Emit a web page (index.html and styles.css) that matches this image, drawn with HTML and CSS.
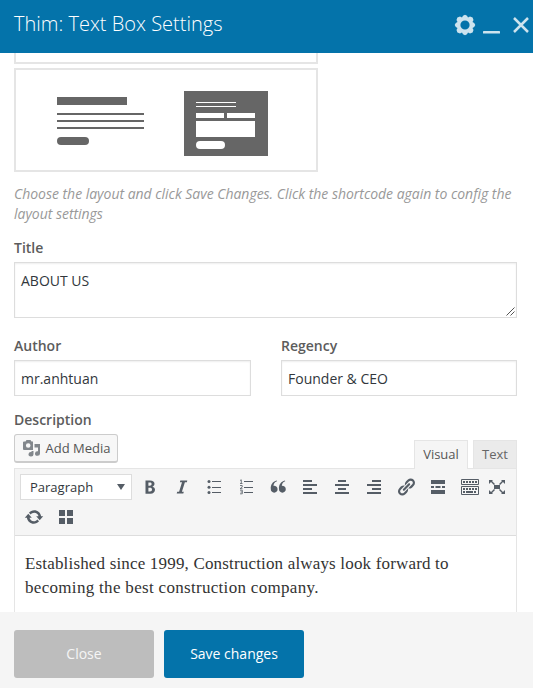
FILE: index.html
```html
<!DOCTYPE html>
<html lang="en">
<head>
<meta charset="utf-8">
<title>Thim: Text Box Settings</title>
<link rel="stylesheet" href="styles.css">
</head>
<body>
<div class="dialog">
  <header class="header">
    <h1 class="heading">Thim: Text Box Settings</h1>
    <div class="controls">
      <svg class="gear" width="22" height="22" viewBox="-11 -11 22 22"><path fill-rule="evenodd" d="M-2-9.2 0-10.3 2-9.2 3-7.5 5-8.5 7.6-7.6 8.5-5 7.5-3 9.2-2 10.3 0 9.2 2 7.5 3 8.5 5 7.6 7.6 5 8.5 3 7.5 2 9.2 0 10.3-2 9.2-3 7.5-5 8.5-7.6 7.6-8.5 5-7.5 3-9.2 2-10.3 0-9.2-2-7.5-3-8.5-5-7.6-7.6-5-8.5-3-7.5ZM0-4.6A4.6 4.6 0 1 0 0 4.6 4.6 4.6 0 1 0 0-4.6Z"/></svg>
      <svg class="minimize" width="17" height="22" viewBox="0 0 17 22"><rect y="17" width="17" height="2.6" rx=".6"/></svg>
      <svg class="dismiss" width="18" height="18" viewBox="0 0 18 18"><path d="M2 2 16 16M16 2 2 16"/></svg>
    </div>
  </header>

  <main class="content">
    <div class="layout-card layout-card-cut"></div>
    <div class="layout-card">
      <div class="sketch">
        <i class="sketch-title"></i><i class="sketch-line"></i><i class="sketch-line"></i><i class="sketch-line"></i><i class="sketch-pill"></i>
      </div>
      <div class="sketch-form">
        <i class="form-line"></i><i class="form-line"></i>
        <div class="form-row"><i></i><i></i></div>
        <i class="form-area"></i><i class="form-pill"></i>
      </div>
    </div>
    <p class="hint"><span class="hint-first">Choose the layout and click Save Changes. Click the shortcode again to config the</span><br>layout settings</p>

    <div class="label">Title</div>
    <div class="field field-area"><span>ABOUT US</span>
      <svg class="grip" width="9" height="9" viewBox="0 0 9 9"><path d="M.5 8.5 8.5.5M4.5 8.5 8.5 4.5"/></svg>
    </div>

    <div class="columns">
      <div><div class="label">Author</div><div class="field author">mr.anhtuan</div></div>
      <div><div class="label">Regency</div><div class="field regency">Founder &amp; CEO</div></div>
    </div>

    <div class="label">Description</div>
    <div class="editor-head">
      <div class="media-button">
        <svg width="18" height="17" viewBox="0 0 18 17"><path fill-rule="evenodd" d="M1 1.500H2.500L3.500 0H7.500L8.500 1.500H10V10H1Q0 10 0 9V2.500Q0 1.500 1 1.500ZM5.200 3.200A2.300 2.300 0 1 0 5.200 7.800 2.300 2.300 0 1 0 5.200 3.200Z"/><path d="M11.500 4H17V13.500A2.500 2.300 0 1 1 15 11.300V7.500H11.500ZM8.500 11H10.500V14.200A2.500 2.200 0 1 1 8.500 12.100Z"/></svg>
        <span>Add Media</span>
      </div>
      <div class="tabs"><div class="tab tab-active">Visual</div><div class="tab tab-text">Text</div></div>
    </div>

    <div class="editor">
      <div class="toolbar">
        <div class="row">
          <div class="select"><span>Paragraph</span><svg width="8" height="6" viewBox="0 0 8 6"><path d="M0 0H8L4 6Z"/></svg></div>
          <div class="tool"><svg viewBox="0 0 20 20"><path fill-rule="evenodd" d="M5.500 3.500H10C13 3.500 14.500 4.800 14.500 6.800 14.500 8.300 13.700 9.300 12.400 9.700 14.100 10 15 11.200 15 12.800 15 15.200 13.300 16.700 10.500 16.700H5.500ZM8.400 5.600V8.800H9.700C11 8.800 11.600 8.200 11.600 7.100 11.600 6 11 5.600 9.700 5.600ZM8.400 10.800V14.400H10C11.400 14.400 12 13.700 12 12.500 12 11.300 11.300 10.800 10 10.800Z"/></svg></div>
          <div class="tool"><svg viewBox="0 0 20 20"><path d="M8.300 3.500H15.300L14.900 5.300H12.900L9.900 14.700H11.800L11.300 16.500H4.700L5.200 14.700H7.100L10 5.300H7.900Z"/></svg></div>
          <div class="tool"><svg viewBox="0 0 20 20"><path d="M8 4H17V5H8ZM8 10H17V11H8ZM8 15H17V16H8Z"/><circle cx="5" cy="4.500" r="1.500"/><circle cx="5" cy="10.200" r="1.500"/><circle cx="5" cy="15.600" r="1.500"/></svg></div>
          <div class="tool"><svg viewBox="0 0 20 20"><path d="M8 4H17V5H8ZM8 10H17V11H8ZM8 15H17V16H8Z"/><path class="thin" d="M4 3.500 5.300 2.800V6.500M4 6.500H6.500M4 8.500H6.200V10.100L4 11.700H6.500M4 13.200H6.300V16.800H4M4.500 15H6.300"/></svg></div>
          <div class="tool"><svg viewBox="0 0 20 20"><path d="M9 4.200C6.500 5 5.300 7.300 5.600 8.900A3.400 3.400 0 1 1 2.800 12C2.400 8 4.500 4.600 8.800 3.500ZM17.200 4.200C14.800 5 13.700 7.300 13.900 8.900A3.400 3.400 0 1 1 11 12C10.600 8 12.700 4.600 17 3.500Z"/></svg></div>
          <div class="tool"><svg viewBox="0 0 20 20"><path d="M3 3H12V5H3ZM3 7H17V9H3ZM3 11H12V13H3ZM3 15H17V17H3Z"/></svg></div>
          <div class="tool"><svg viewBox="0 0 20 20"><path d="M6 3H14V5H6ZM3 7H17V9H3ZM6 11H14V13H6ZM3 15H17V17H3Z"/></svg></div>
          <div class="tool"><svg viewBox="0 0 20 20"><path d="M8 3H17V5H8ZM3 7H17V9H3ZM8 11H17V13H8ZM3 15H17V17H3Z"/></svg></div>
          <div class="tool"><svg viewBox="0 0 20 20"><path d="M17.740 2.760c1.680 1.690 1.680 4.410 0 6.100l-1.530 1.520c-1.120 1.120-2.700 1.470-4.140 1.090l2.620-2.610.76-.77.76-.76c.84-.84.84-2.200 0-3.040-.84-.85-2.200-.85-3.040 0l-.77.76-3.380 3.380c-.37-1.440-.02-3.020 1.100-4.140l1.520-1.530c1.690-1.680 4.420-1.680 6.100 0zM8.590 13.430l5.340-5.340c.42-.42.42-1.100 0-1.520-.44-.43-1.130-.39-1.530 0l-5.330 5.340c-.42.42-.42 1.100 0 1.520.44.43 1.130.39 1.520 0zm-.76 2.290l4.140-4.150c.38 1.440.03 3.020-1.090 4.140l-1.520 1.530c-1.690 1.680-4.410 1.680-6.100 0-1.680-1.680-1.680-4.420 0-6.100l1.530-1.520c1.120-1.120 2.700-1.470 4.140-1.100l-4.140 4.150c-.85.84-.85 2.200 0 3.050.84.84 2.200.84 3.040 0z"/></svg></div>
          <div class="tool"><svg viewBox="0 0 20 20"><path d="M3 3H17V7H3ZM3 9H6V11H3ZM7.500 9H12.500V11H7.500ZM14 9H17V11H14ZM3 13H17V17H3Z"/></svg></div>
          <div class="tool"><svg viewBox="0 0 20 20"><path class="keys" d="M1.500 2.500H18.500V7.500H1.500ZM1.500 9.500H18.500V17.500H1.500Z"/><path class="dots" d="M3 5H17M3 12H17M3 15H5M14 15H17"/><path d="M6 14H13V16H6Z"/></svg></div>
          <div class="tool tool-narrow"><svg viewBox="0 0 20 20"><path d="M7 8H13V12H7ZM2 3H6L5 4 8 7 7 8 4 5 2 7ZM18 3H14L15 4 12 7 13 8 16 5 18 7ZM2 17H6L5 16 8 13 7 12 4 15 2 13ZM18 17H14L15 16 12 13 13 12 16 15 18 13Z"/></svg></div>
        </div>
        <div class="row row-second">
          <div class="tool"><svg viewBox="0 0 20 20"><path d="M10.200 3.280c3.530 0 6.430 2.610 6.920 6h2.080l-3.500 4-3.500-4h2.320c-.45-1.970-2.210-3.450-4.320-3.450-1.450 0-2.730.71-3.540 1.780L4.950 5.660C6.230 4.200 8.110 3.280 10.200 3.280zm-.4 13.440c-3.520 0-6.430-2.610-6.920-6H.8l3.500-4c1.170 1.330 2.330 2.670 3.500 4H5.480c.45 1.970 2.210 3.450 4.320 3.450 1.450 0 2.730-.71 3.540-1.780l1.710 1.950c-1.280 1.460-3.150 2.380-5.250 2.380z"/></svg></div>
          <div class="tool"><svg viewBox="0 0 20 20"><path d="M3 3H9V9H3ZM11 3H17V9H11ZM3 11H9V17H3ZM11 11H17V17H11Z"/></svg></div>
        </div>
      </div>
      <div class="copy"><span class="copy-first">Established since 1999, Construction always look forward to</span><br><span class="copy-second">becoming the best construction company.</span></div>
    </div>
  </main>

  <footer class="footer"><div class="button button-close">Close</div><div class="button button-save">Save changes</div></footer>
</div>
</body>
</html>
```

FILE: styles.css
```css
* { box-sizing: border-box; }
body { margin: 0; background: #fff; color: #32373c; font: 14px/20px "Open Sans", sans-serif; }
.dialog { display: flex; flex-direction: column; height: 688px; overflow: hidden; white-space: nowrap; }
svg { display: block; flex: none; }

.header { flex: none; display: flex; justify-content: space-between; height: 53px; padding-left: 14px; background: #0473aa; color: #fff; }
.heading { margin: 0; font-size: 20px; font-weight: 300; line-height: 48px; }
.controls { display: flex; padding: 14px 3px 0 0; fill: #cde3ee; }
.minimize { margin-left: 7px; }
.dismiss { margin: 2px 0 0 12px; fill: none; stroke: #cde3ee; stroke-width: 2.5; }

.content { flex: 1; min-height: 0; overflow: hidden; padding: 0 16px 0 14px; }
.layout-card { display: flex; width: 304px; height: 104px; border: 2px solid #e5e5e5; padding: 21px 0 0 41px; }
.layout-card-cut { height: 11px; margin-bottom: 4px; border-top: 0; padding: 0; }
.sketch { display: flex; flex-direction: column; width: 87px; margin-right: 40px; padding-top: 6px; }
.sketch i { display: block; background: #666; }
.sketch .sketch-title { width: 70px; height: 8px; margin-bottom: 8px; }
.sketch .sketch-line { height: 2px; margin-bottom: 5px; }
.sketch .sketch-pill { width: 32px; height: 8px; margin-top: 3px; border-radius: 4px; }
.sketch-form { width: 84px; height: 65px; padding: 11px 13px 0 12px; background: #666; }
.sketch-form i { display: block; background: #fff; }
.sketch-form .form-line { width: 40px; height: 1px; margin-bottom: 3px; }
.form-row { display: flex; gap: 3px; margin-top: 6px; }
.form-row i { flex: 1; height: 5px; }
.sketch-form .form-area { height: 16px; margin-top: 3px; }
.sketch-form .form-pill { width: 29px; height: 8px; margin-top: 4px; border-radius: 4px; }

.hint { margin: 12px 0 14px; color: #999; font-style: italic; letter-spacing: -.025px; }
.label { height: 20px; color: #5c5c5c; font-weight: 600; }
.field { height: 36px; padding: 8px 6px; border: 1px solid #ddd; box-shadow: inset 0 1px 2px rgba(0,0,0,.07); line-height: 20px; }
.field-area { display: flex; justify-content: space-between; align-items: flex-end; height: 56px; margin: 4px 0 18px; padding: 0 1px 1px 6px; }
.field-area span { align-self: flex-start; padding-top: 8px; }
.grip { fill: none; stroke: #555; stroke-width: 1; }
.columns { display: grid; grid-template-columns: 237px 236px; gap: 30px; margin-bottom: 14px; }
.columns .field { margin-top: 4px; }

.editor-head { display: flex; justify-content: space-between; height: 34px; margin-top: 4px; }
.media-button { display: flex; align-items: center; gap: 5px; width: 104px; height: 29px; padding: 0 8px 0 7.5px; border: 1px solid #ccc; border-bottom-width: 2px; border-radius: 3px; background: #f7f7f7; color: #555; font-size: 13px; fill: #82878c; }
.tabs { display: flex; gap: 5px; margin-top: 6px; font-size: 13px; color: #666; }
.tab { height: 28px; border: 1px solid #e5e5e5; border-bottom: 0; background: #ebebeb; line-height: 27px; text-align: center; }
.tab-active { width: 54px; height: 29px; background: #f5f5f5; color: #555; position: relative; }
.tab-text { width: 44px; }

.editor { border: 1px solid #e5e5e5; height: 160px; }
.toolbar { height: 67px; padding: 3px 0 0 5px; border-bottom: 1px solid #ddd; background: #f5f5f5; fill: #555d66; }
.row { display: flex; height: 30px; }
.row-second { margin-left: -2px; }
.select { display: flex; align-items: center; justify-content: space-between; width: 112px; height: 26px; margin: 2px 2px 0 0; padding: 0 6px 0 9px; border: 1px solid #ddd; background: #fff; font-size: 13px; }
.tool { display: flex; align-items: center; justify-content: center; width: 32px; height: 30px; }
.tool svg { width: 20px; height: 20px; }
.tool-narrow { width: 22px; }
.thin { fill: none; stroke: #555d66; stroke-width: .8; }
.keys { fill: none; stroke: #555d66; }
.dots { fill: none; stroke: #555d66; stroke-width: 2; stroke-dasharray: 2 1; }
.copy { padding: 16px 10px; color: #333; font: 17px/24px Georgia, "Liberation Serif", serif; }
.copy-first { letter-spacing: .17px; }
.copy-second { letter-spacing: .31px; }

.footer { flex: none; display: flex; gap: 10px; height: 76px; padding: 18px 14px 0; background: #f5f5f5; }
.button { width: 140px; height: 48px; border-radius: 3px; color: #fff; line-height: 48px; text-align: center; }
.button-close { background: #bdbdbd; color: #f5f5f5; }
.button-save { background: #0473aa; }
```
